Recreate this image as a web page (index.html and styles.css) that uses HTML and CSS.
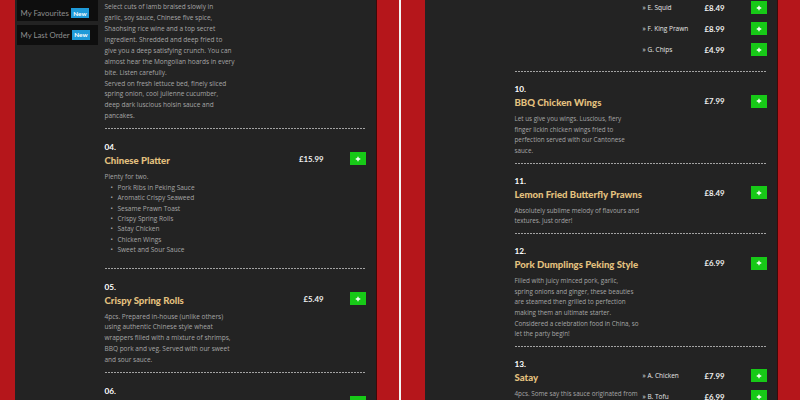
FILE: index.html
```html
<!DOCTYPE html>
<html>
<head>
<meta charset="utf-8">
<link rel="stylesheet" href="styles.css">
</head>
<body>
<div class="pane pane-left">
  <div class="page">
    <aside class="sidebar">
      <div class="side-link side-link-first">My Favourites <span class="badge">New</span></div>
      <div class="side-link">My Last Order <span class="badge">New</span></div>
    </aside>
    <main class="menu menu-left">
      <div class="item item-tail">
        <p class="desc">Select cuts of lamb braised slowly in<br>garlic, soy sauce, Chinese five spice,<br>Shaohsing rice wine and a top secret<br>ingredient. Shredded and deep fried to<br>give you a deep satisfying crunch. You can<br>almost hear the Mongolian hoards in every<br>bite. Listen carefully.<br>Served on fresh lettuce bed, finely sliced<br>spring onion, cool julienne cucumber,<br>deep dark luscious hoisin sauce and<br>pancakes.</p>
      </div>
      <div class="item">
        <div class="num">04.</div>
        <div class="row">
          <div class="info">
            <h3 class="title">Chinese Platter</h3>
            <p class="desc">Plenty for two.</p>
            <ul class="list">
              <li>Pork Ribs in Peking Sauce</li>
              <li>Aromatic Crispy Seaweed</li>
              <li>Sesame Prawn Toast</li>
              <li>Crispy Spring Rolls</li>
              <li>Satay Chicken</li>
              <li>Chicken Wings</li>
              <li>Sweet and Sour Sauce</li>
            </ul>
          </div>
          <div class="opts">
            <div class="opt"><span class="opt-name"></span><span class="price">£15.99</span><button class="add"><svg viewBox="0 0 8 8" width="6" height="6"><path d="M4 1v6M1 4h6" stroke="#fff" stroke-width="1.7"/></svg></button></div>
          </div>
        </div>
      </div>
      <div class="item">
        <div class="num">05.</div>
        <div class="row">
          <div class="info">
            <h3 class="title">Crispy Spring Rolls</h3>
            <p class="desc">4pcs. Prepared in-house (unlike others)<br>using authentic Chinese style wheat<br>wrappers filled with a mixture of shrimps,<br>BBQ pork and veg. Served with our sweet<br>and sour sauce.</p>
          </div>
          <div class="opts">
            <div class="opt"><span class="opt-name"></span><span class="price">£5.49</span><button class="add"><svg viewBox="0 0 8 8" width="6" height="6"><path d="M4 1v6M1 4h6" stroke="#fff" stroke-width="1.7"/></svg></button></div>
          </div>
        </div>
      </div>
      <div class="item">
        <div class="num">06.</div>
        <div class="row">
          <div class="info">
            <h3 class="title">Vegetable Spring Rolls</h3>
          </div>
          <div class="opts">
            <div class="opt"><span class="opt-name"></span><span class="price">£5.49</span><button class="add"><svg viewBox="0 0 8 8" width="6" height="6"><path d="M4 1v6M1 4h6" stroke="#fff" stroke-width="1.7"/></svg></button></div>
          </div>
        </div>
      </div>
    </main>
  </div>
</div>
<div class="divider"></div>
<div class="pane pane-right">
  <div class="page">
    <aside class="sidebar"></aside>
    <main class="menu menu-right">
      <div class="item item-tail">
        <div class="row">
          <div class="info"></div>
          <div class="opts opts-top">
            <div class="opt"><span class="opt-name">» E. Squid</span><span class="price">£8.49</span><button class="add"><svg viewBox="0 0 8 8" width="6" height="6"><path d="M4 1v6M1 4h6" stroke="#fff" stroke-width="1.7"/></svg></button></div>
            <div class="opt"><span class="opt-name">» F. King Prawn</span><span class="price">£8.99</span><button class="add"><svg viewBox="0 0 8 8" width="6" height="6"><path d="M4 1v6M1 4h6" stroke="#fff" stroke-width="1.7"/></svg></button></div>
            <div class="opt"><span class="opt-name">» G. Chips</span><span class="price">£4.99</span><button class="add"><svg viewBox="0 0 8 8" width="6" height="6"><path d="M4 1v6M1 4h6" stroke="#fff" stroke-width="1.7"/></svg></button></div>
          </div>
        </div>
      </div>
      <div class="item">
        <div class="num">10.</div>
        <div class="row">
          <div class="info">
            <h3 class="title">BBQ Chicken Wings</h3>
            <p class="desc">Let us give you wings. Luscious, fiery<br>finger lickin chicken wings fried to<br>perfection served with our Cantonese<br>sauce.</p>
          </div>
          <div class="opts">
            <div class="opt"><span class="opt-name"></span><span class="price">£7.99</span><button class="add"><svg viewBox="0 0 8 8" width="6" height="6"><path d="M4 1v6M1 4h6" stroke="#fff" stroke-width="1.7"/></svg></button></div>
          </div>
        </div>
      </div>
      <div class="item">
        <div class="num">11.</div>
        <div class="row">
          <div class="info">
            <h3 class="title">Lemon Fried Butterfly Prawns</h3>
            <p class="desc">Absolutely sublime melody of flavours and<br>textures. Just order!</p>
          </div>
          <div class="opts">
            <div class="opt"><span class="opt-name"></span><span class="price">£8.49</span><button class="add"><svg viewBox="0 0 8 8" width="6" height="6"><path d="M4 1v6M1 4h6" stroke="#fff" stroke-width="1.7"/></svg></button></div>
          </div>
        </div>
      </div>
      <div class="item">
        <div class="num">12.</div>
        <div class="row">
          <div class="info">
            <h3 class="title">Pork Dumplings Peking Style</h3>
            <p class="desc">Filled with juicy minced pork, garlic,<br>spring onions and ginger, these beauties<br>are steamed then grilled to perfection<br>making them an ultimate starter.<br>Considered a celebration food in China, so<br>let the party begin!</p>
          </div>
          <div class="opts">
            <div class="opt"><span class="opt-name"></span><span class="price">£6.99</span><button class="add"><svg viewBox="0 0 8 8" width="6" height="6"><path d="M4 1v6M1 4h6" stroke="#fff" stroke-width="1.7"/></svg></button></div>
          </div>
        </div>
      </div>
      <div class="item">
        <div class="num">13.</div>
        <div class="row">
          <div class="info">
            <h3 class="title">Satay</h3>
            <p class="desc">4pcs. Some say this sauce originated from<br>Indonesia, others say Malaysia.</p>
          </div>
          <div class="opts">
            <div class="opt"><span class="opt-name">» A. Chicken</span><span class="price">£7.99</span><button class="add"><svg viewBox="0 0 8 8" width="6" height="6"><path d="M4 1v6M1 4h6" stroke="#fff" stroke-width="1.7"/></svg></button></div>
            <div class="opt"><span class="opt-name">» B. Tofu</span><span class="price">£6.99</span><button class="add"><svg viewBox="0 0 8 8" width="6" height="6"><path d="M4 1v6M1 4h6" stroke="#fff" stroke-width="1.7"/></svg></button></div>
          </div>
        </div>
      </div>
    </main>
  </div>
</div>
</body>
</html>
```
FILE: styles.css
```css
* { box-sizing: border-box; }
html, body { margin: 0; padding: 0; }
body {
  width: 800px;
  height: 400px;
  overflow: hidden;
  display: flex;
  background: #b5161b;
  font-family: Lato, "Liberation Sans", sans-serif;
}
.pane {
  width: 399px;
  height: 400px;
  overflow: hidden;
  background: #b5161b;
  display: flex;
  flex: none;
}
.pane-left { padding: 0 22.5px 0 14.5px; }
.pane-right { padding: 0 22.5px 0 23.5px; }
.divider { width: 2px; height: 400px; flex: none; background: #f4f4f4; }
.page {
  flex: 1;
  min-width: 0;
  background: #232323;
  display: flex;
  gap: 7px;
  padding: 0 10px 0 2px;
  border-right: 1px solid #3a0a0a;
}
.sidebar {
  width: 81px;
  flex: none;
  display: flex;
  flex-direction: column;
  gap: 4px;
}
.side-link {
  height: 20px;
  background: #0e0e0e;
  color: #8e8e8e;
  font-size: 7.8px;
  display: flex;
  align-items: center;
  padding: 0 0 1px 4px;
  white-space: nowrap;
}
.side-link-first {
  height: 21px;
  align-items: flex-end;
  padding-bottom: 3px;
}
.badge {
  background: #1f9ad8;
  color: #fff;
  font-weight: 700;
  font-size: 6.4px;
  padding: 1.5px 2.5px;
  margin-left: 2px;
  line-height: 7px;
}
.menu { flex: 1; min-width: 0; }
.menu-left { padding-top: 2.2px; }
.menu-right { padding-top: 1px; }
.item { padding-top: 12.8px; }
.item::after {
  content: "";
  display: block;
  height: 1px;
  margin-top: 6px;
  background: repeating-linear-gradient(to right, #a3a3a3 0 2px, transparent 2px 3px);
}
.menu-right .item { padding-top: 12.2px; }
.item-tail, .menu-right .item-tail { padding-top: 0; }
.num {
  color: #fff;
  font-weight: 700;
  font-size: 8.2px;
  line-height: 10px;
}
.row {
  display: flex;
  justify-content: space-between;
  margin-top: 2px;
}
.item-tail .row { margin-top: 0; }
.info { min-width: 0; flex: 1; }
.title {
  margin: 0;
  color: #e3c17f;
  font-size: 9.6px;
  line-height: 14px;
  font-weight: 900;
  white-space: nowrap;
}
.desc {
  margin: 4px 0 0;
  color: #a6a6a6;
  font-family: "Open Sans", Lato, sans-serif;
  font-size: 6.5px;
  line-height: 10.9px;
  white-space: nowrap;
}
.menu-right .desc { line-height: 10.6px; font-size: 6.3px; }
.item-tail .desc { margin-top: 0; }
.list {
  margin: 0 0 6px;
  padding: 0 0 0 13px;
  list-style: none;
  color: #a6a6a6;
  font-family: "Open Sans", Lato, sans-serif;
  font-size: 6.5px;
  line-height: 10.4px;
}
.list li::before {
  content: "•";
  display: inline-block;
  width: 7px;
  margin-left: -7px;
}
.opts {
  width: 124px;
  flex: none;
  margin-top: -1.5px;
}
.opts-top { margin-top: 0; padding-bottom: 1px; }
.opt {
  display: flex;
  align-items: center;
  height: 13px;
  margin-bottom: 8px;
}
.opt-name {
  width: 54px;
  color: #e6e6e6;
  font-family: "Open Sans", Lato, sans-serif;
  font-size: 6.5px;
  white-space: nowrap;
}
.price {
  width: 28px;
  text-align: right;
  color: #f0f0f0;
  font-weight: 700;
  font-size: 7.8px;
  white-space: nowrap;
}
.add {
  margin-left: auto;
  width: 16px;
  height: 13px;
  border: 0;
  padding: 0;
  background: #17c917;
  display: flex;
  align-items: center;
  justify-content: center;
}
.add svg { display: block; }
```
